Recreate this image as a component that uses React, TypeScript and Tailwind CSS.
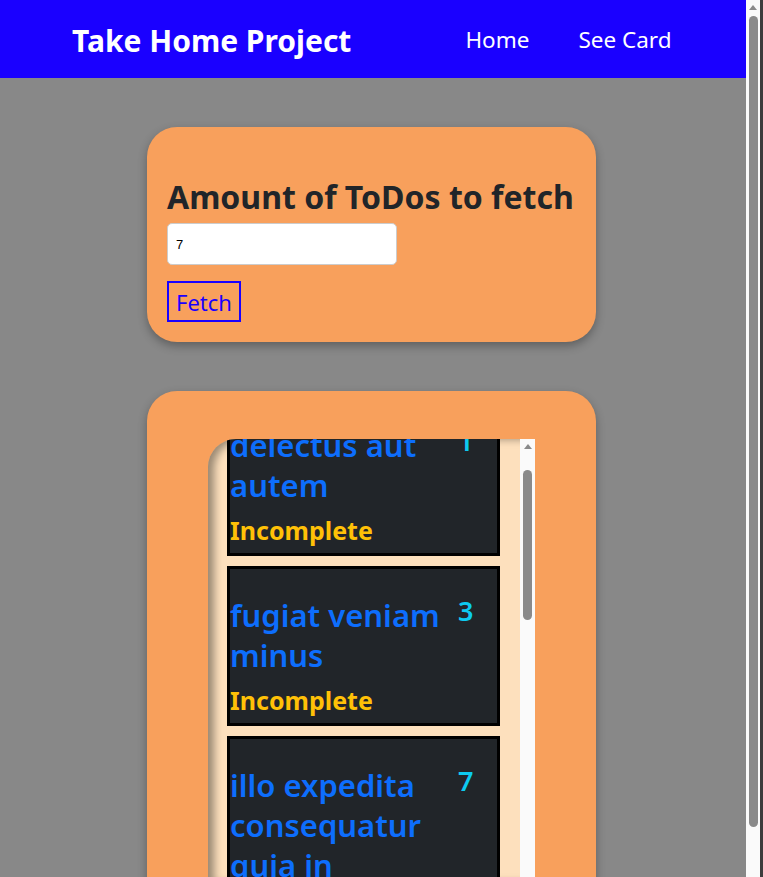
import { useLayoutEffect, useRef } from "react";

const todos = [
  { id: 1, title: "delectus aut autem", done: false },
  { id: 3, title: "fugiat veniam minus", done: false },
  { id: 7, title: "illo expedita consequatur quia in", done: false },
];

function TodoItem({ id, title, done }: { id: number; title: string; done: boolean }) {
  return (
    <div className="bg-[#212529] border-[3px] border-black pt-[26px] pb-[5px] flex flex-col shrink-0">
      <div className="flex">
        <h3 className="w-[226px] text-[31px] leading-[40px] font-semibold text-[#0d6efd]">{title}</h3>
        <span className="text-[27px] leading-[32px] font-semibold text-[#0dcaf0] pl-[2px]">{id}</span>
      </div>
      <p className="mt-[7px] text-[25px] leading-[36px] font-bold text-[#ffc107]">{done ? "Complete" : "Incomplete"}</p>
    </div>
  );
}

// classic scrollbar look (the headless shot shows none of its own)
function FakeScrollbar({ thumbTop, thumbHeight, className }: { thumbTop: number; thumbHeight: number; className: string }) {
  return (
    <div className={`flex flex-col items-center bg-[#fafafa] ${className}`}>
      <div className="mt-[5px] w-0 h-0 border-l-[4px] border-r-[4px] border-b-[5px] border-l-transparent border-r-transparent border-b-[#8a8a8a]" />
      <div className="w-[9px] rounded-full bg-[#8a8a8a]" style={{ marginTop: thumbTop, height: thumbHeight }} />
    </div>
  );
}

export default function App() {
  const listRef = useRef<HTMLDivElement>(null);

  useLayoutEffect(() => {
    if (listRef.current) listRef.current.scrollTop = 63;
  }, []);

  return (
    <div className="flex items-start bg-[#888888]" style={{ fontFamily: '"Noto Sans", sans-serif' }}>
      <div className="flex-1 min-h-[910px]">
        {/* Navbar */}
        <nav className="h-[78px] bg-[#1a00ff] flex items-center pl-[72px] pt-[2px]">
          <span className="text-white font-bold text-[30px]">Take Home Project</span>
          <div className="flex gap-[49px] ml-[114px] text-white text-[22.5px]">
            <a href="#">Home</a>
            <a href="#">See Card</a>
          </div>
        </nav>

        <main className="flex flex-col items-center gap-[49px] mt-[49px] pr-[3px]">
          {/* Fetch form */}
          <section className="w-[449px] bg-[#f8a05c] rounded-[30px] shadow-[0_4px_10px_rgba(0,0,0,0.3)] px-[20px] pt-[50px] pb-[20px]">
            <h2 className="text-[32px] leading-[40px] font-bold text-[#212529] mb-[6px]">Amount of ToDos to fetch</h2>
            <input
              type="number"
              defaultValue={7}
              className="block w-[230px] h-[42px] bg-white border border-[#cccccc] rounded-[5px] px-[8px] text-[13px] text-black"
              style={{ fontFamily: '"Liberation Sans", Arial, sans-serif' }}
            />
            <button className="block mt-[16px] h-[41px] px-[7px] border-2 border-[#1a00ff] text-[#1a00ff] text-[22px] leading-none">
              Fetch
            </button>
          </section>

          {/* ToDo list */}
          <section className="w-[449px] bg-[#f8a05c] rounded-[30px] shadow-[0_4px_10px_rgba(0,0,0,0.3)] pt-[48px] pb-[31px] pl-[61px]">
            <div className="flex w-[327px] h-[440px]">
              <div
                ref={listRef}
                className="flex-1 overflow-hidden bg-[#fde0bd] rounded-tl-[28px] shadow-[inset_8px_2px_8px_-2px_rgba(0,0,0,0.4)] pl-[19px] pr-[20px] py-[20px] flex flex-col gap-[10px]"
              >
                {todos.map((t) => (
                  <TodoItem key={t.id} {...t} />
                ))}
              </div>
              <FakeScrollbar className="w-[15px] h-full" thumbTop={21} thumbHeight={150} />
            </div>
          </section>
        </main>
      </div>

      {/* page scrollbar */}
      <div className="flex h-[877px] shrink-0">
        <FakeScrollbar className="w-[14px] h-full" thumbTop={6} thumbHeight={811} />
        <div className="w-[3px] h-full bg-[#3c3c3c]" />
      </div>
    </div>
  );
}
